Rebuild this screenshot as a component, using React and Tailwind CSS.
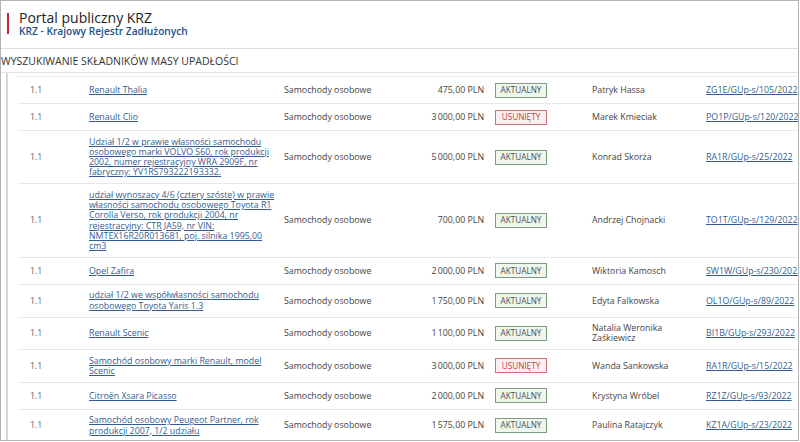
const rows = [
  { desc: "Renault Thalia", amount: "475,00 PLN", status: "AKTUALNY", name: "Patryk Hassa", sig: "ZG1E/GUp-s/105/2022" },
  { desc: "Renault Clio", amount: "3\u202F000,00 PLN", status: "USUNIĘTY", name: "Marek Kmieciak", sig: "PO1P/GUp-s/120/2022" },
  {
    desc: "Udział 1/2 w prawie własności samochodu osobowego marki VOLVO S60, rok produkcji 2002, numer rejestracyjny WRA 2909F, nr fabryczny: YV1RS793222193332.",
    amount: "5\u202F000,00 PLN",
    status: "AKTUALNY",
    name: "Konrad Skorża",
    sig: "RA1R/GUp-s/25/2022",
  },
  {
    desc: "udział wynoszacy 4/6 (cztery szóste) w prawie własności samochodu osobowego Toyota R1 Corolla Verso, rok produkcji 2004, nr rejestracyjny: CTR JA59, nr VIN: NMTEX16R20R013681, poj. silnika 1995,00 cm3",
    amount: "700,00 PLN",
    status: "AKTUALNY",
    name: "Andrzej Chojnacki",
    sig: "TO1T/GUp-s/129/2022",
  },
  { desc: "Opel Zafira", amount: "2\u202F000,00 PLN", status: "AKTUALNY", name: "Wiktoria Kamosch", sig: "SW1W/GUp-s/230/2022" },
  {
    desc: "udział 1/2 we współwłasności samochodu osobowego Toyota Yaris 1.3",
    amount: "1\u202F750,00 PLN",
    status: "AKTUALNY",
    name: "Edyta Falkowska",
    sig: "OL1O/GUp-s/89/2022",
  },
  { desc: "Renault Scenic", amount: "1\u202F100,00 PLN", status: "AKTUALNY", name: "Natalia Weronika Zaśkiewicz", sig: "BI1B/GUp-s/293/2022" },
  {
    desc: "Samochód osobowy marki Renault, model Scenic",
    amount: "3\u202F000,00 PLN",
    status: "USUNIĘTY",
    name: "Wanda Sankowska",
    sig: "RA1R/GUp-s/15/2022",
  },
  { desc: "Citroën Xsara Picasso", amount: "2\u202F000,00 PLN", status: "AKTUALNY", name: "Krystyna Wróbel", sig: "RZ1Z/GUp-s/93/2022" },
  {
    desc: "Samochód osobowy Peugeot Partner, rok produkcji 2007, 1/2 udziału",
    amount: "1\u202F575,00 PLN",
    status: "AKTUALNY",
    name: "Paulina Ratajczyk",
    sig: "KZ1A/GUp-s/23/2022",
  },
];

function Badge({ status }) {
  if (status === "USUNIĘTY") {
    return (
      <span className="inline-flex h-[15px] w-[52px] items-center justify-center border border-[#c9707b] bg-[#fcf1f2] text-[8.2px] text-[#b8404e]">
        {status}
      </span>
    );
  }
  return (
    <span className="inline-flex h-[15px] w-[52px] items-center justify-center border border-[#7f9c80] bg-[#eef6ee] text-[8.2px] text-[#4d4d4d]">
      {status}
    </span>
  );
}

export default function App() {
  return (
    <div
      className="h-[441px] w-[799px] overflow-hidden border border-[#b4b4b4] bg-white text-[#444]"
      style={{ fontFamily: '"Open Sans", "DejaVu Sans", sans-serif' }}
    >
      {/* naglowek */}
      <div className="flex h-[48px] items-start border-b border-[#dedede] pt-[9px]">
        <div className="ml-[6px] mt-[3px] h-[21px] w-[2px] bg-[#c8283c]" />
        <div className="ml-[10px]">
          <div className="text-[14px] leading-[15px] text-[#222]">Portal publiczny KRZ</div>
          <div className="text-[10.2px] font-semibold leading-[12px] text-[#24508a]">
            KRZ - Krajowy Rejestr Zadłużonych
          </div>
        </div>
      </div>

      <div className="flex h-[24px] items-center border-b border-[#e2e2e2] pt-[2px] text-[10.5px] text-[#333]">
        WYSZUKIWANIE SKŁADNIKÓW MASY UPADŁOŚCI
      </div>

      {/* tabela */}
      <div className="ml-[5px] h-full border-l-2 border-[#d6d6d6] pl-[10px] pt-[3px]">
        <div className="border-t border-[#eeeeee]">
          {rows.map((r, i) => (
            <div
              key={i}
              className="flex items-center border-b border-[#e8e8e8] py-[5.5px] text-[8.8px] leading-[10.3px]"
            >
              <div className="w-[71px] shrink-0 pl-[12px] text-[#666]">1.1</div>
              <div className="w-[195px] shrink-0 pr-[6px]">
                <a href="#" className="text-[#335d92] underline">
                  {r.desc}
                </a>
              </div>
              <div className="w-[120px] shrink-0">Samochody osobowe</div>
              <div className="w-[80px] shrink-0 whitespace-nowrap text-right">{r.amount}</div>
              <div className="w-[108px] shrink-0 pl-[11px]">
                <Badge status={r.status} />
              </div>
              <div className="w-[114px] shrink-0 pr-[12px]">{r.name}</div>
              <div className="shrink-0 whitespace-nowrap">
                <a href="#" className="text-[#335d92] underline">
                  {r.sig}
                </a>
              </div>
            </div>
          ))}
        </div>
      </div>
    </div>
  );
}
